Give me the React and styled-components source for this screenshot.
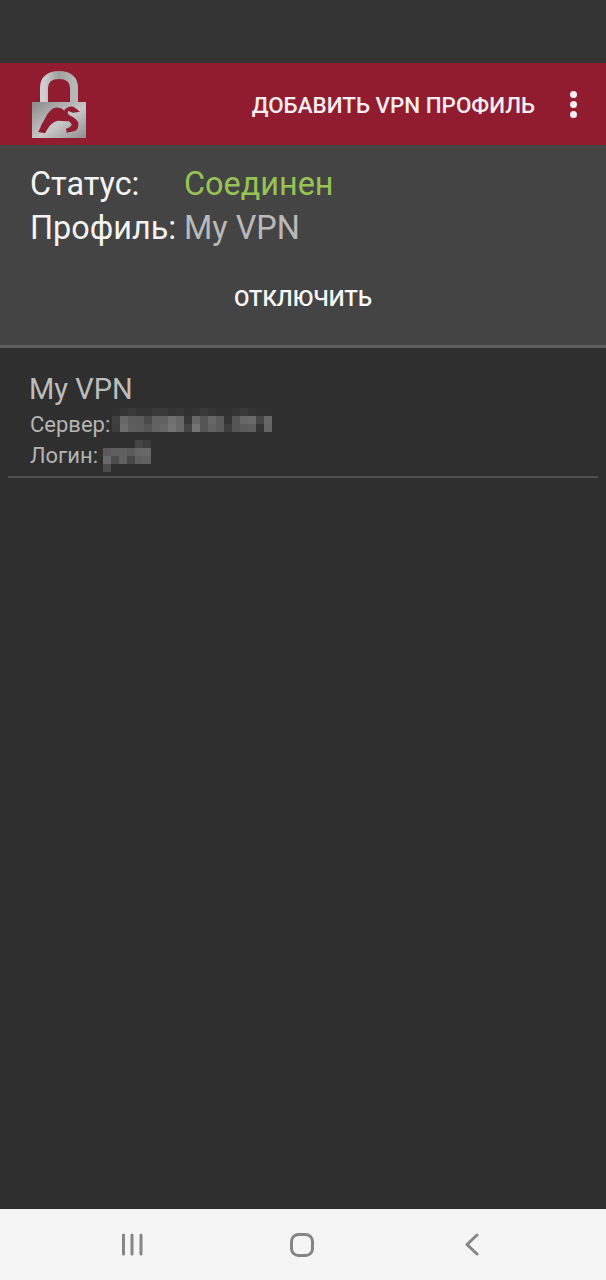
import React from 'react';
import styled, { createGlobalStyle } from 'styled-components';

const GlobalStyle = createGlobalStyle`
  html, body {
    margin: 0;
    padding: 0;
    background: #2f2f2f;
  }
  * {
    box-sizing: border-box;
  }
`

const Screen = styled.div`
  width: 606px;
  height: 1280px;
  display: flex;
  flex-direction: column;
  background: #2f2f2f;
  font-family: Roboto, "Liberation Sans", sans-serif;
`

const StatusBar = styled.div`
  height: 63px;
  background: #333333;
`

const Toolbar = styled.div`
  height: 82px;
  display: flex;
  align-items: center;
  padding: 0 29px 0 32px;
  background: #911c30;
`

const ToolbarAction = styled.div`
  margin-left: auto;
  margin-right: 35px;
  padding-top: 2px;
  color: #f6eef0;
  font-size: 22.4px;
  font-weight: 500;
`

const Dots = styled.div`
  display: flex;
  flex-direction: column;
  gap: 3px;
`

const Dot = styled.span`
  width: 7px;
  height: 7px;
  border-radius: 50%;
  background: #f6eef0;
`

const StatusPanel = styled.div`
  height: 203px;
  padding: 17px 30px 0;
  background: #444444;
  border-bottom: 3px solid #5e5e5e;
`

const StatusRow = styled.div`
  display: flex;
  height: 44px;
  align-items: center;
  font-size: 32.4px;
`

const StatusLabel = styled.span`
  width: 155px;
  color: #f4f4f4;
`

const StatusValue = styled.span`
  margin-left: -1px;
  color: ${props => props.$connected ? '#97c355' : '#b9b9b9'};
`

const DisconnectButton = styled.div`
  margin-top: 35px;
  text-align: center;
  color: #f8f8f8;
  font-size: 22.4px;
  font-weight: 500;
`

const ProfileItem = styled.div`
  margin: 0 8px;
  height: 130px;
  padding: 25px 22px 0;
  border-bottom: 2px solid #505050;
`

const ProfileName = styled.div`
  margin: 0 0 4px -1px;
  color: #bdbdbd;
  font-size: 29px;
  line-height: 32px;
`

const ProfileLine = styled.div`
  display: flex;
  align-items: center;
  height: 31px;
  color: #b4b4b4;
  font-size: 22px;
`

const Mosaic = styled.span`
  display: grid;
  align-self: flex-start;
  grid-auto-rows: 8px;
  grid-template-columns: repeat(${props => props.$cols}, 8px);
  margin-left: ${props => props.$gap}px;
  margin-top: ${props => props.$top}px;
`

const MosaicCell = styled.span.attrs(props => ({
  style: { background: props.$shade },
}))``

const Spacer = styled.div`
  flex: 1;
`

const NavBar = styled.div`
  height: 71px;
  display: flex;
  align-items: center;
  padding-left: 122px;
  background: #f5f5f5;
`

const NavIcon = styled.svg`
  display: block;
  margin-right: ${props => props.$after}px;
  color: #858585;
`

const serverCells = [
  '#303030', '#353535', '#3a3a3a', '#333333', '#333333', '#3a3a3a', '#3a3a3a', '#333333', '#363636', '#303030',
  '#333333', '#3a3a3a', '#353535', '#303030', '#303030', '#353535', '#3a3a3a', '#333333', '#303030', '#303030',
  '#404040', '#666666', '#5c5c5c', '#5a5a5a', '#4a4a4a', '#606060', '#606060', '#707070', '#666666', '#363636',
  '#666666', '#555555', '#666666', '#5a5a5a', '#333333', '#555555', '#666666', '#6a6a6a', '#454545', '#666666',
  '#3c3c3c', '#6c6c6c', '#5e5e5e', '#5c5c5c', '#555555', '#626262', '#666666', '#747474', '#686868', '#444444',
  '#747474', '#555555', '#626262', '#5a5a5a', '#3e3e3e', '#555555', '#5a5a5a', '#5e5e5e', '#333333', '#646464',
]

const loginCells = [
  '#2f2f2f', '#2f2f2f', '#2f2f2f', '#2f2f2f', '#454545', '#3d3d3d',
  '#5a5a5a', '#5f5f5f', '#606060', '#5a5a5a', '#666666', '#686868',
  '#686868', '#4c4c4c', '#606060', '#474747', '#5f5f5f', '#626262',
  '#4c4c4c', '#2f2f2f', '#2f2f2f', '#2f2f2f', '#2f2f2f', '#2f2f2f',
]

const Lock = () => (
  <svg width="54" height="67" viewBox="0 -2 54 67">
    <defs>
      <linearGradient id="shackle" x1="0" x2="1" y1="0" y2="0">
        <stop offset="0" stopColor="#cfcfcf" />
        <stop offset="0.5" stopColor="#a0a0a0" />
        <stop offset="1" stopColor="#b8b8b8" />
      </linearGradient>
      <linearGradient id="body" x1="0" x2="1" y1="0" y2="1">
        <stop offset="0" stopColor="#8a8a8a" />
        <stop offset="0.55" stopColor="#c8c8c8" />
        <stop offset="1" stopColor="#8e8e8e" />
      </linearGradient>
    </defs>
    <path d="M12 30V15C12 6 18 2 27 2S42 6 42 15V30" fill="none" stroke="url(#shackle)" strokeWidth="8" />
    <rect x="0" y="29" width="54" height="36" fill="url(#body)" />
    <path d="M6.3 59L9.7 51.3C13 46 15 41 18 38C21 35 24 34 26.3 34.7C30 35 32 37 33 39.7C34 43 35 46 36.3 48C32 49 28 47 24.7 48C21 49 18 52 16.3 54.7L13 60.3Z" fill="#911c30" />
    <path d="M36.3 34C39 33 41 33.5 43 34.7L48 38.7L41.3 39.7C39 39.5 37.5 38 36.3 38C35.5 39.5 35.5 40.5 36.3 41.3C40 44 45 46 46.3 49.7C47 54 45 57 43 58L34.7 59.7L34 55.7C37 55 39.5 53.5 39.7 51.3C38 48 33 47 32 43C31.5 40 32 37 33 36.3Z" fill="#911c30" />
  </svg>
)

const App = () => {
  return (
    <Screen>
      <GlobalStyle />
      <StatusBar />
      <Toolbar>
        <Lock />
        <ToolbarAction>ДОБАВИТЬ VPN ПРОФИЛЬ</ToolbarAction>
        <Dots><Dot /><Dot /><Dot /></Dots>
      </Toolbar>
      <StatusPanel>
        <StatusRow>
          <StatusLabel>Статус:</StatusLabel>
          <StatusValue $connected>Соединен</StatusValue>
        </StatusRow>
        <StatusRow>
          <StatusLabel>Профиль:</StatusLabel>
          <StatusValue>My VPN</StatusValue>
        </StatusRow>
        <DisconnectButton>ОТКЛЮЧИТЬ</DisconnectButton>
      </StatusPanel>
      <ProfileItem>
        <ProfileName>My VPN</ProfileName>
        <ProfileLine>
          Сервер:
          <Mosaic $cols={20} $gap={2} $top={-1}>
            {serverCells.map((c, i) => <MosaicCell key={i} $shade={c} />)}
          </Mosaic>
        </ProfileLine>
        <ProfileLine>
          Логин:
          <Mosaic $cols={6} $gap={5} $top={0}>
            {loginCells.map((c, i) => <MosaicCell key={i} $shade={c} />)}
          </Mosaic>
        </ProfileLine>
      </ProfileItem>
      <Spacer />
      <NavBar>
        <NavIcon $after={146} width="22" height="23" viewBox="0 0 22 23" fill="none" stroke="currentColor" strokeWidth="3" strokeLinecap="round">
          <path d="M1.5 2V21M10 2V21M19 2V21" />
        </NavIcon>
        <NavIcon $after={151} width="24" height="24" viewBox="0 0 24 24" fill="none" stroke="currentColor" strokeWidth="3">
          <rect x="1.5" y="1.5" width="21" height="21" rx="7" />
        </NavIcon>
        <NavIcon width="14" height="23" viewBox="0 0 14 23" fill="none" stroke="currentColor" strokeWidth="3" strokeLinecap="round" strokeLinejoin="round">
          <path d="M12 2L2 11.5L12 21" />
        </NavIcon>
      </NavBar>
    </Screen>
  )
}

export default App
